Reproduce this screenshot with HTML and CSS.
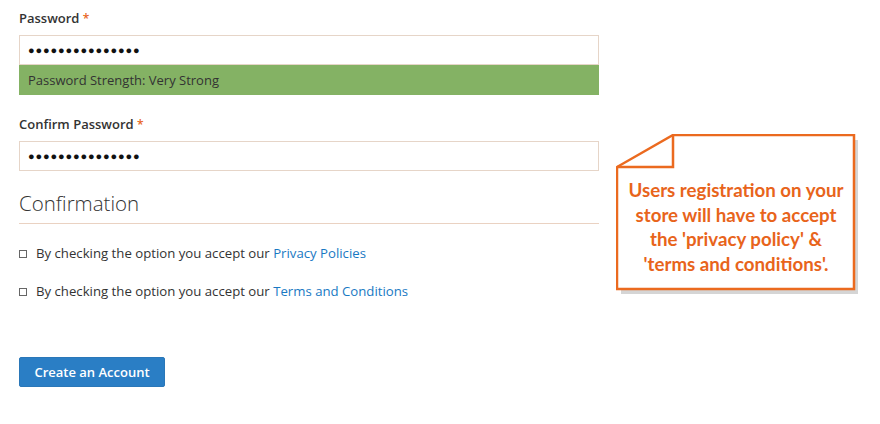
FILE: index.html
```html
<!DOCTYPE html>
<html>
<head>
<meta charset="utf-8">
<link rel="stylesheet" href="styles.css">
</head>
<body>
<form class="form">
  <div class="field">
    <label class="label">Password <span class="req">*</span></label>
    <div class="control">
      <div class="input">&#9679;&#9679;&#9679;&#9679;&#9679;&#9679;&#9679;&#9679;&#9679;&#9679;&#9679;&#9679;&#9679;&#9679;&#9679;</div>
      <div class="meter">Password Strength: Very Strong</div>
    </div>
  </div>
  <div class="field field-confirm">
    <label class="label">Confirm Password <span class="req">*</span></label>
    <div class="control">
      <div class="input">&#9679;&#9679;&#9679;&#9679;&#9679;&#9679;&#9679;&#9679;&#9679;&#9679;&#9679;&#9679;&#9679;&#9679;&#9679;</div>
    </div>
  </div>
  <h2 class="legend">Confirmation</h2>
  <div class="check-row"><span class="box"></span><span>By checking the option you accept our <a class="link">Privacy Policies</a></span></div>
  <div class="check-row"><span class="box"></span><span>By checking the option you accept our <a class="link">Terms and Conditions</a></span></div>
  <div class="actions"><button type="button" class="btn">Create an Account</button></div>
</form>

<div class="callout">
  <svg class="callout-shape" width="250" height="170" viewBox="0 0 250 170">
    <polygon points="59,3 240,3 240,157 3,157 3,35" fill="#b9b9b9" transform="translate(2,3)" opacity="0.6"/>
    <polygon points="57,1 238,1 238,155 1,155 1,33" fill="#fff" stroke="#eb6a1f" stroke-width="2.5" stroke-linejoin="miter"/>
    <polyline points="57,1 57,33 1,33" fill="none" stroke="#eb6a1f" stroke-width="2.5"/>
  </svg>
  <p class="callout-text">Users registration on your<br>store will have to accept<br>the 'privacy policy' &amp;<br>'terms and conditions'.</p>
</div>
</body>
</html>
```

FILE: styles.css
```css
html, body {
  margin: 0;
  padding: 0;
  background: #fff;
}
body {
  font-family: "Open Sans", "Liberation Sans", sans-serif;
  color: #333;
  position: relative;
  width: 880px;
  height: 424px;
  overflow: hidden;
}
.form {
  width: 580px;
  padding: 8px 0 0 19px;
  display: flex;
  flex-direction: column;
}
.field {
  display: flex;
  flex-direction: column;
  gap: 7px;
}
.field-confirm {
  margin-top: 19px;
}
.label {
  font-size: 13px;
  font-weight: 600;
  line-height: 20px;
  height: 20px;
  color: #333;
}
.req {
  color: #e8641b;
  font-size: 12px;
  margin-left: 0;
}
.control {
  display: flex;
  flex-direction: column;
}
.input {
  box-sizing: border-box;
  height: 30px;
  border: 1px solid #e6d5c8;
  padding: 0 8px;
  font-size: 11px;
  letter-spacing: 0.85px;
  line-height: 28px;
  color: #111;
}
.meter {
  box-sizing: border-box;
  height: 30px;
  background: #84b264;
  padding: 0 9px;
  font-size: 13px;
  line-height: 30px;
  color: #333;
}
.legend {
  margin: 17px 0 0;
  font-size: 20.5px;
  font-weight: 300;
  line-height: 30px;
  padding-bottom: 5px;
  border-bottom: 1px solid #ead2c2;
  color: #333;
}
.check-row {
  display: flex;
  align-items: center;
  gap: 9px;
  font-size: 13.2px;
  line-height: 20px;
  margin-top: 19px;
}
.check-row + .check-row {
  margin-top: 18px;
}
.box {
  box-sizing: border-box;
  width: 8px;
  height: 8px;
  border: 1px solid #666;
  margin-top: 1px;
}
.link {
  color: #1979c3;
}
.actions {
  margin-top: 56px;
}
.btn {
  box-sizing: border-box;
  width: 146px;
  height: 30px;
  background: #2a7ec5;
  border: 1px solid #2a77b8;
  border-radius: 2px;
  color: #fff;
  font-family: "Open Sans", "Liberation Sans", sans-serif;
  font-size: 13px;
  font-weight: 600;
  padding: 0;
}
.callout {
  position: absolute;
  left: 616px;
  top: 134px;
  width: 250px;
  height: 170px;
}
.callout-shape {
  position: absolute;
  left: 0;
  top: 0;
}
.callout-text {
  position: absolute;
  left: 2px;
  top: 44px;
  width: 236px;
  margin: 0;
  text-align: center;
  font-family: "Lato", "Open Sans", sans-serif;
  font-weight: 700;
  font-size: 18.7px;
  line-height: 24.7px;
  color: #e8641b;
  white-space: nowrap;
}
```
